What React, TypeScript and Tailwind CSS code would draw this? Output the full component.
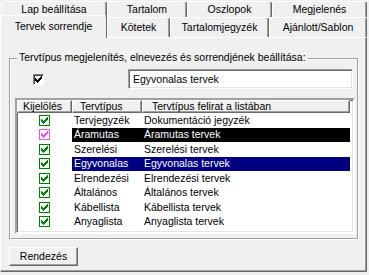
const rows = [
  { type: "Tervjegyzék", label: "Dokumentáció jegyzék", hl: "" },
  { type: "Áramutas", label: "Áramutas tervek", hl: "black" },
  { type: "Szerelési", label: "Szerelési tervek", hl: "" },
  { type: "Egyvonalas", label: "Egyvonalas tervek", hl: "navy" },
  { type: "Elrendezési", label: "Elrendezési tervek", hl: "" },
  { type: "Általános", label: "Általános tervek", hl: "" },
  { type: "Kábellista", label: "Kábellista tervek", hl: "" },
  { type: "Anyaglista", label: "Anyaglista tervek", hl: "" },
];

// ─── Tabs ─────────────────────────────────────────────────────────────────────

function Tab({ label, className }: { label: string; className: string }) {
  return (
    <div
      className={`flex items-center justify-center rounded-t-[3px] border-l border-r border-t border-l-white border-r-[#696969] border-t-white bg-[#f0f0f0] shadow-[inset_-1px_0_0_#a0a0a0] ${className}`}
    >
      {label}
    </div>
  );
}

function Check({ color }: { color: string }) {
  return (
    <svg width="7" height="7" viewBox="0 0 7 7" shapeRendering="crispEdges">
      <path
        d="M6 0h1v3h-1zM5 1h1v3h-1zM4 2h1v3h-1zM3 3h1v3h-1zM2 4h1v3h-1zM1 3h1v3h-1zM0 2h1v3h-1z"
        fill={color}
      />
    </svg>
  );
}

function ListCheck({ pink }: { pink?: boolean }) {
  return (
    <div
      className={`flex h-[11px] w-[11px] items-center justify-center border bg-white ${
        pink ? "border-[#f050f0]" : "border-[#008000]"
      }`}
    >
      <Check color={pink ? "#f050f0" : "#008000"} />
    </div>
  );
}

export default function App() {
  return (
    <div className="h-[275px] w-[369px] overflow-hidden bg-[#f0f0f0] font-['Liberation_Sans',Arial,sans-serif] text-[10.5px] leading-[13px] text-black">
      {/* tab strip */}
      <div className="h-[37px]">
        <div className="flex h-[17px] pl-px pt-px">
          <Tab label="Lap beállítása" className="h-[16px] w-[106px]" />
          <Tab label="Tartalom" className="h-[16px] w-[80px]" />
          <Tab label="Oszlopok" className="h-[16px] w-[85px]" />
          <Tab label="Megjelenés" className="h-[16px] w-[95px]" />
        </div>
        <div className="flex h-[20px] items-start">
          <Tab label="Tervek sorrendje" className="relative z-10 -mt-[2px] h-[23px] w-[107px] pb-[2px] shadow-none" />
          <Tab label="Kötetek" className="h-[20px] w-[63px]" />
          <Tab label="Tartalomjegyzék" className="h-[20px] w-[99px]" />
          <Tab label="Ajánlott/Sablon" className="h-[20px] w-[98px]" />
        </div>
      </div>

      {/* page */}
      <div className="h-[235px] w-[367px] border border-b-[#696969] border-l-white border-r-[#696969] border-t-white shadow-[inset_-1px_-1px_0_#a0a0a0]">
        <div className="relative ml-[8px] mt-[20px] h-[181px] w-[349px] border border-[#a0a0a0] shadow-[inset_1px_1px_0_#fff,1px_1px_0_#fff]">
          <span className="absolute left-[7px] top-[-8px] bg-[#f0f0f0] px-[2px] leading-[13px]">
            Tervtípus megjelenítés, elnevezés és sorrendjének beállítása:
          </span>

          <div className="mt-[10px] flex h-[20px] items-center">
            <div className="ml-[23px] flex h-[11px] w-[11px] items-center justify-center border border-b-white border-l-[#808080] border-r-white border-t-[#808080] bg-white shadow-[inset_1px_1px_0_#404040]">
              <Check color="#000" />
            </div>
            <div className="ml-auto mr-[4px] flex h-[20px] w-[225px] items-center border border-b-white border-l-[#a0a0a0] border-r-white border-t-[#a0a0a0] bg-white px-[4px] shadow-[inset_1px_1px_0_#696969,inset_-1px_-1px_0_#e3e3e3]">
              Egyvonalas tervek
            </div>
          </div>

          <div className="ml-[5px] mt-[9px] h-[136px] w-[340px] border-2 border-b-white border-l-[#a0a0a0] border-r-white border-t-[#a0a0a0] bg-white shadow-[inset_1px_1px_0_#696969,inset_-1px_-1px_0_#e3e3e3]">
            <div className="flex h-[13px] w-[333px] bg-[#f0f0f0]">
              <div className="flex w-[55px] items-center border border-b-[#696969] border-l-white border-r-[#696969] border-t-white pl-[5px] shadow-[inset_-1px_-1px_0_#a0a0a0]">
                Kijelölés
              </div>
              <div className="flex w-[70px] items-center border border-b-[#696969] border-l-white border-r-[#696969] border-t-white pl-[7px] shadow-[inset_-1px_-1px_0_#a0a0a0]">
                Tervtípus
              </div>
              <div className="flex w-[208px] items-center border border-b-[#696969] border-l-white border-r-[#696969] border-t-white pl-[9px] shadow-[inset_-1px_-1px_0_#a0a0a0]">
                Tervtípus felirat a listában
              </div>
            </div>
            {rows.map((r) => (
              <div key={r.type} className="flex h-[14.5px] w-[333px] items-center">
                <div className="flex w-[55px] justify-center">
                  <ListCheck pink={r.hl === "black"} />
                </div>
                <div
                  className={`flex h-full w-[278px] items-center ${
                    r.hl === "black"
                      ? "bg-black text-white"
                      : r.hl === "navy"
                        ? "bg-[#000080] text-white"
                        : ""
                  }`}
                >
                  <span className="w-[70px] pl-[2px]">{r.type}</span>
                  <span className="pl-[2px]">{r.label}</span>
                </div>
              </div>
            ))}
          </div>
        </div>

        <button className="ml-[8px] mt-[8px] flex h-[19px] w-[69px] items-center justify-center border border-b-[#696969] border-l-white border-r-[#696969] border-t-white bg-[#f0f0f0] shadow-[inset_-1px_-1px_0_#a0a0a0]">
          Rendezés
        </button>
      </div>
    </div>
  );
}
